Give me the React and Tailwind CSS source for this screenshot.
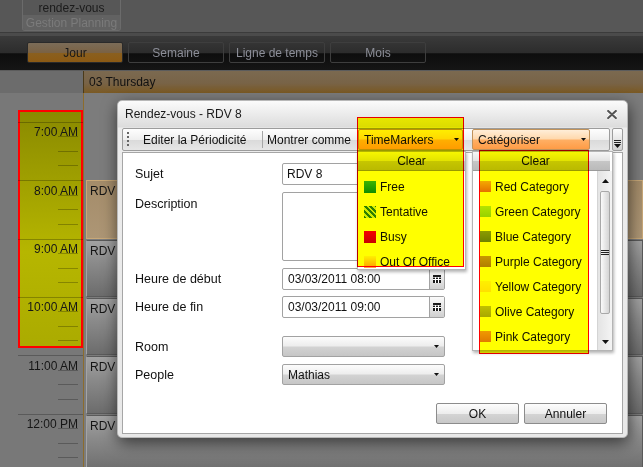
import React from "react";

const slots = [
  { label: "7:00 AM", h: "h-[58px]" },
  { label: "8:00 AM", h: "h-[59px]" },
  { label: "9:00 AM", h: "h-[58px]" },
  { label: "10:00 AM", h: "h-[58px]" },
  { label: "11:00 AM", h: "h-[59px]" },
  { label: "12:00 PM", h: "h-[58px]" },
];

const markers = [
  { name: "Free", swatch: "bg-[linear-gradient(#3cb43c,#128c12)]" },
  {
    name: "Tentative",
    swatch:
      "bg-[repeating-linear-gradient(45deg,#2f7f1f_0px,#2f7f1f_2px,#d0eca8_2px,#d0eca8_4px)]",
  },
  { name: "Busy", swatch: "bg-[linear-gradient(#f40000,#c80000)]" },
  { name: "Out Of Office", swatch: "bg-[linear-gradient(#fff0d8,#ffa040)]" },
];

// colours before the yellow highlight is multiplied over them
const categories = [
  { name: "Red Category", swatch: "bg-[linear-gradient(#f4aaa8,#e4701f)]" },
  { name: "Green Category", swatch: "bg-[linear-gradient(#b4e2b0,#96d296)]" },
  { name: "Blue Category", swatch: "bg-[linear-gradient(#8c9cd8,#6e82c8)]" },
  { name: "Purple Category", swatch: "bg-[linear-gradient(#c898d8,#b07ec8)]" },
  { name: "Yellow Category", swatch: "bg-[linear-gradient(#fff0a0,#ffe070)]" },
  { name: "Olive Category", swatch: "bg-[linear-gradient(#c0c070,#a8a850)]" },
  { name: "Pink Category", swatch: "bg-[linear-gradient(#f09ac8,#e07ab0)]" },
];

const DownArrow = () => (
  <svg width="5" height="3" viewBox="0 0 5 3" className="shrink-0">
    <path d="M0 0h5L2.5 3z" fill="#111" />
  </svg>
);

const TimeColumn = () => (
  <div className="relative w-[83px] shrink-0 bg-[#787878] pl-[18px]">
    {/* selected range highlight */}
    <div className="absolute left-[18px] top-[17px] w-[65px] h-[238px] border-2 border-[#ff0000] bg-[linear-gradient(#8a8a00,#b6b600_60%,#abab00)]" />
    <div className="relative">
      <div className="h-[29px]" />
      {slots.map((s) => (
        <div key={s.label} className={`${s.h} border-t border-black/25 flex flex-col`}>
          {[0, 1, 2, 3].map((q) => (
            <div key={q} className="flex-1 flex flex-col justify-end items-end pr-[5px]">
              {q === 0 && (
                <span className="leading-[12px] mb-[-2px] text-[#161616] whitespace-nowrap">{s.label}</span>
              )}
              {q < 3 && <div className="w-[20px] h-px bg-black/25" />}
            </div>
          ))}
        </div>
      ))}
    </div>
  </div>
);

const Rdv = ({ h, selected, gap }) => (
  <div
    className={`${h} ${gap ? "mt-[1px]" : ""} shrink-0 pl-[3px] pt-[3px] text-[#151515] border ${
      selected
        ? "border-[#c8a878] bg-[linear-gradient(#a48c6a,#ad9675)]"
        : "border-[#5a5a5a] border-l-[#a4a4a4] bg-[linear-gradient(#a2a2a2,#8a8a8a_40%,#6c6c6c)]"
    }`}
  >
    RDV
  </div>
);

const Appointments = () => (
  <div className="flex-1 flex flex-col border-l border-[#8c6c2c] bg-[#7c7c7c] pl-[2px]">
    <div className="h-[87px] shrink-0" />
    <Rdv h="h-[59px]" selected />
    <Rdv h="h-[57px]" gap />
    <Rdv h="h-[57px]" gap />
    <Rdv h="h-[58px]" gap />
    <Rdv h="h-[58px]" gap />
  </div>
);

const Combo = ({ label, className }) => (
  <div
    className={`${className} shrink-0 h-[21px] flex items-center justify-between pl-[5px] pr-[3px] border border-[#c0925a] rounded-[2px] bg-[linear-gradient(#ffeed8,#ffd9ae_45%,#ffae62_55%,#ff9c46)] text-[#111]`}
  >
    <span>{label}</span>
    <DownArrow />
  </div>
);

const Input = ({ children, h = "h-[22px]" }) => (
  <div className={`${h} w-[163px] flex items-center border border-[#a2a2a2] rounded-[2px] bg-white text-[#111]`}>
    {children}
  </div>
);

const DateInput = ({ value }) => (
  <Input>
    <span className="flex-1 pl-[5px]">{value}</span>
    <div className="w-[15px] h-full flex items-center justify-center border-l border-[#a2a2a2] bg-[linear-gradient(#fbfbfb,#e6e6e6_50%,#cfcfcf)]">
      <svg width="8" height="8" viewBox="0 0 8 8">
        <rect width="8" height="8" fill="#1a1a1a" />
        <rect x="2" y="2" width="1" height="6" fill="#fff" />
        <rect x="5" y="2" width="1" height="6" fill="#fff" />
        <rect x="0" y="4" width="8" height="1" fill="#fff" />
        <rect x="0" y="2" width="8" height="0.6" fill="#fff" />
      </svg>
    </div>
  </Input>
);

const Select = ({ value }) => (
  <div className="h-[21px] w-[163px] flex items-center justify-between pl-[5px] pr-[5px] border border-[#a2a2a2] rounded-[2px] bg-[linear-gradient(#fcfcfc,#eeeeee_45%,#d2d2d2_55%,#c6c6c6)] text-[#111]">
    <span>{value}</span>
    <DownArrow />
  </div>
);

const Row = ({ label, mt, top, children }) => (
  <div className={`${mt} flex ${top ? "items-start" : "items-center"}`}>
    <span className={`w-[147px] shrink-0 text-[12.5px] text-[#111] ${top ? "pt-[5px]" : ""}`}>{label}</span>
    {children}
  </div>
);

const ClearBar = ({ className = "" }) => (
  <div
    className={`${className} h-[19px] shrink-0 flex items-center justify-center border-b border-[#9a9a9a] bg-[linear-gradient(#f6f6f6,#e2e2e2_50%,#c6c6c6_52%,#bababa)] text-[#111]`}
  >
    Clear
  </div>
);

const Scrollbar = () => (
  <div className="w-[15px] shrink-0 flex flex-col border-l border-[#d4d4d4] bg-[linear-gradient(90deg,#e4e4e4,#f4f4f4)]">
    <div className="h-[20px] flex items-center justify-center">
      <svg width="7" height="4" viewBox="0 0 7 4">
        <path d="M0 4h7L3.5 0z" fill="#111" />
      </svg>
    </div>
    <div className="h-[123px] mx-[2px] flex items-center justify-center border border-[#a8a8a8] rounded-[2px] bg-[linear-gradient(90deg,#fafafa,#d4d4d4)]">
      <svg width="8" height="5" viewBox="0 0 8 5">
        <rect y="0" width="8" height="1" fill="#222" />
        <rect y="2" width="8" height="1" fill="#222" />
        <rect y="4" width="8" height="1" fill="#222" />
      </svg>
    </div>
    <div className="flex-1" />
    <div className="h-[17px] flex items-center justify-center">
      <svg width="7" height="4" viewBox="0 0 7 4">
        <path d="M0 0h7L3.5 4z" fill="#111" />
      </svg>
    </div>
  </div>
);

const Dialog = () => (
  <div className="absolute left-[117px] top-[100px] w-[511px] h-[338px] rounded-[5px] border border-[#b8b8b8] bg-[linear-gradient(#fbfbfb,#dcdcdc_26px,#ececec_27px,#e8e8e8)] shadow-[1px_5px_16px_rgba(0,0,0,0.6)] px-[4px] flex flex-col">
    {/* title */}
    <div className="h-[26px] shrink-0 flex items-center justify-between pl-[3px] pr-[6px] text-[#1a1a1a]">
      <span>Rendez-vous - RDV 8</span>
      <svg width="10" height="9" viewBox="0 0 10 9">
        <path d="M1.2 1L8.8 8M8.8 1L1.2 8" stroke="#fff" strokeWidth="3.6" strokeLinecap="round" />
        <path d="M1.2 1L8.8 8M8.8 1L1.2 8" stroke="#555" strokeWidth="2.2" strokeLinecap="round" />
      </svg>
    </div>

    {/* toolbar */}
    <div className="mt-[1px] h-[23px] shrink-0 flex gap-[2px]">
      <div className="w-[488px] flex items-center border border-[#9c9c9c] rounded-[2px] bg-[linear-gradient(#fefefe,#efefef_50%,#dadada_52%,#e6e6e6)] text-[#111]">
        <div className="w-[20px] shrink-0 pl-[4px] flex items-center">
          <svg width="2" height="15" viewBox="0 0 2 15">
            {[0, 4, 8, 12].map((y) => (
              <rect key={y} x="0" y={y} width="2" height="2" fill="#666" />
            ))}
          </svg>
        </div>
        <span className="w-[119px] shrink-0">Editer la Périodicité</span>
        <div className="w-px h-[17px] shrink-0 bg-[#a6a6a6]" />
        <span className="w-[94px] shrink-0 pl-[4px] whitespace-nowrap overflow-hidden">Montrer comme</span>
        <Combo className="ml-[1px] w-[105px]" label="TimeMarkers" />
        <Combo className="ml-[9px] w-[118px]" label="Catégoriser" />
      </div>
      <div className="w-[11px] flex flex-col items-center justify-end pb-[2px] border border-[#9c9c9c] rounded-[2px] bg-[linear-gradient(#fdfdfd,#e6e6e6_50%,#d0d0d0)]">
        <svg width="7" height="8" viewBox="0 0 7 8">
          <rect y="0" width="7" height="1" fill="#222" />
          <rect y="2" width="7" height="1" fill="#222" />
          <path d="M0 4h7L3.5 8z" fill="#111" />
        </svg>
      </div>
    </div>

    {/* form */}
    <div className="mt-[1px] h-[282px] shrink-0 flex flex-col border border-[#a6a6a6] bg-white">
      <div className="flex flex-col pl-[12px]">
        <Row label="Sujet" mt="mt-[10px]">
          <Input>
            <span className="pl-[4px]">RDV 8</span>
          </Input>
        </Row>
        <Row label="Description" mt="mt-[7px]" top>
          <div className="h-[69px] w-[163px] border border-[#a2a2a2] rounded-[2px] bg-white" />
        </Row>
        <Row label="Heure de début" mt="mt-[7px]">
          <DateInput value="03/03/2011 08:00" />
        </Row>
        <Row label="Heure de fin" mt="mt-[6px]">
          <DateInput value="03/03/2011 09:00" />
        </Row>
        <Row label="Room" mt="mt-[18px]">
          <Select value="" />
        </Row>
        <Row label="People" mt="mt-[7px]">
          <Select value="Mathias" />
        </Row>
      </div>
      <div className="mt-[18px] flex justify-end gap-[5px] pr-[15px]">
        {["OK", "Annuler"].map((b) => (
          <div
            key={b}
            className="w-[83px] h-[21px] flex items-center justify-center border border-[#8c8c8c] rounded-[2px] bg-[linear-gradient(#fdfdfd,#ededed_50%,#d4d4d4_52%,#c8c8c8)] text-[#111]"
          >
            {b}
          </div>
        ))}
      </div>
    </div>

    {/* TimeMarkers dropdown */}
    <div className="absolute left-[239px] top-[50px] w-[109px] h-[119px] flex flex-col bg-white border border-[#b4b4b4] shadow-[1px_2px_3px_rgba(0,0,0,0.3)] overflow-hidden text-[#111]">
      <ClearBar />
      <div className="pt-[3px]">
        {markers.map((m) => (
          <div key={m.name} className="h-[25px] flex items-center gap-[4px] pl-[6px]">
            <span className={`w-[12px] h-[12px] shrink-0 ${m.swatch}`} />
            <span className="whitespace-nowrap">{m.name}</span>
          </div>
        ))}
      </div>
    </div>

    {/* Catégoriser dropdown */}
    <div className="absolute left-[354px] top-[50px] w-[141px] h-[200px] flex flex-col bg-white border border-[#b4b4b4] shadow-[1px_2px_3px_rgba(0,0,0,0.3)] text-[#111]">
      <ClearBar className="pr-[12px] mr-[2px]" />
      <div className="flex flex-1 min-h-0">
        <div className="flex-1 pt-[3px] overflow-hidden">
          {categories.map((c) => (
            <div key={c.name} className="h-[25px] flex items-center gap-[4px] pl-[7px]">
              <span className={`w-[11px] h-[11px] shrink-0 ${c.swatch}`} />
              <span className="whitespace-nowrap">{c.name}</span>
            </div>
          ))}
        </div>
        <Scrollbar />
      </div>
    </div>

    {/* yellow highlight boxes */}
    <div className="absolute left-[239px] top-[16px] w-[107px] h-[150px] border border-[#ff0000] bg-[#ffff00] mix-blend-multiply" />
    <div className="absolute left-[361px] top-[49px] w-[110px] h-[204px] border border-[#ff0000] bg-[#ffff00] mix-blend-multiply" />
  </div>
);

const views = ["Jour", "Semaine", "Ligne de temps", "Mois"];

export default function App() {
  return (
    <div className="relative w-[643px] h-[467px] overflow-hidden flex flex-col bg-[#575757] font-['Liberation_Sans',Arial,sans-serif] text-[12px] leading-[14px]">
      {/* ribbon */}
      <div className="h-[32px] shrink-0 pl-[22px]">
        <div className="w-[99px] h-[31px] flex flex-col border border-t-0 border-[#6b6b6b] rounded-b-[3px] overflow-hidden">
          <div className="h-[15px] flex items-center justify-center text-[#1b1b1b]">rendez-vous</div>
          <div className="flex-1 flex items-center justify-center bg-[#626262] text-[#7b7b7b]">Gestion Planning</div>
        </div>
      </div>
      <div className="h-[4px] shrink-0 border-t border-[#3b3b3b] bg-[#4b4b4b]" />

      {/* view switcher */}
      <div className="h-[34px] shrink-0 flex gap-[5px] pl-[27px] pt-[6px] bg-[linear-gradient(#3a3a3a,#2c2c2c_50%,#0d0d0d_52%,#151515)]">
        {views.map((v) => (
          <div
            key={v}
            className={`w-[96px] h-[21px] flex items-center justify-center border rounded-[2px] ${
              v === "Jour"
                ? "border-[#2a2a2a] bg-[linear-gradient(#7b6c58,#7a6244_50%,#8a5f1e_55%,#8c5a14)] text-[#181818]"
                : "border-[#3e3e3e] text-[#8c8e98]"
            }`}
          >
            {v}
          </div>
        ))}
      </div>

      {/* day header */}
      <div className="h-[23px] shrink-0 flex border-t border-[#5c5c5c]">
        <div className="w-[83px] bg-[#6c6c6c]" />
        <div className="flex-1 flex items-center pl-[5px] border-l border-[#4a3a1a] bg-[linear-gradient(#7b6950,#786347_55%,#7b5a24)] text-[#111]">
          03 Thursday
        </div>
      </div>

      {/* day body */}
      <div className="flex-1 flex min-h-0">
        <TimeColumn />
        <Appointments />
      </div>

      <Dialog />
    </div>
  );
}
